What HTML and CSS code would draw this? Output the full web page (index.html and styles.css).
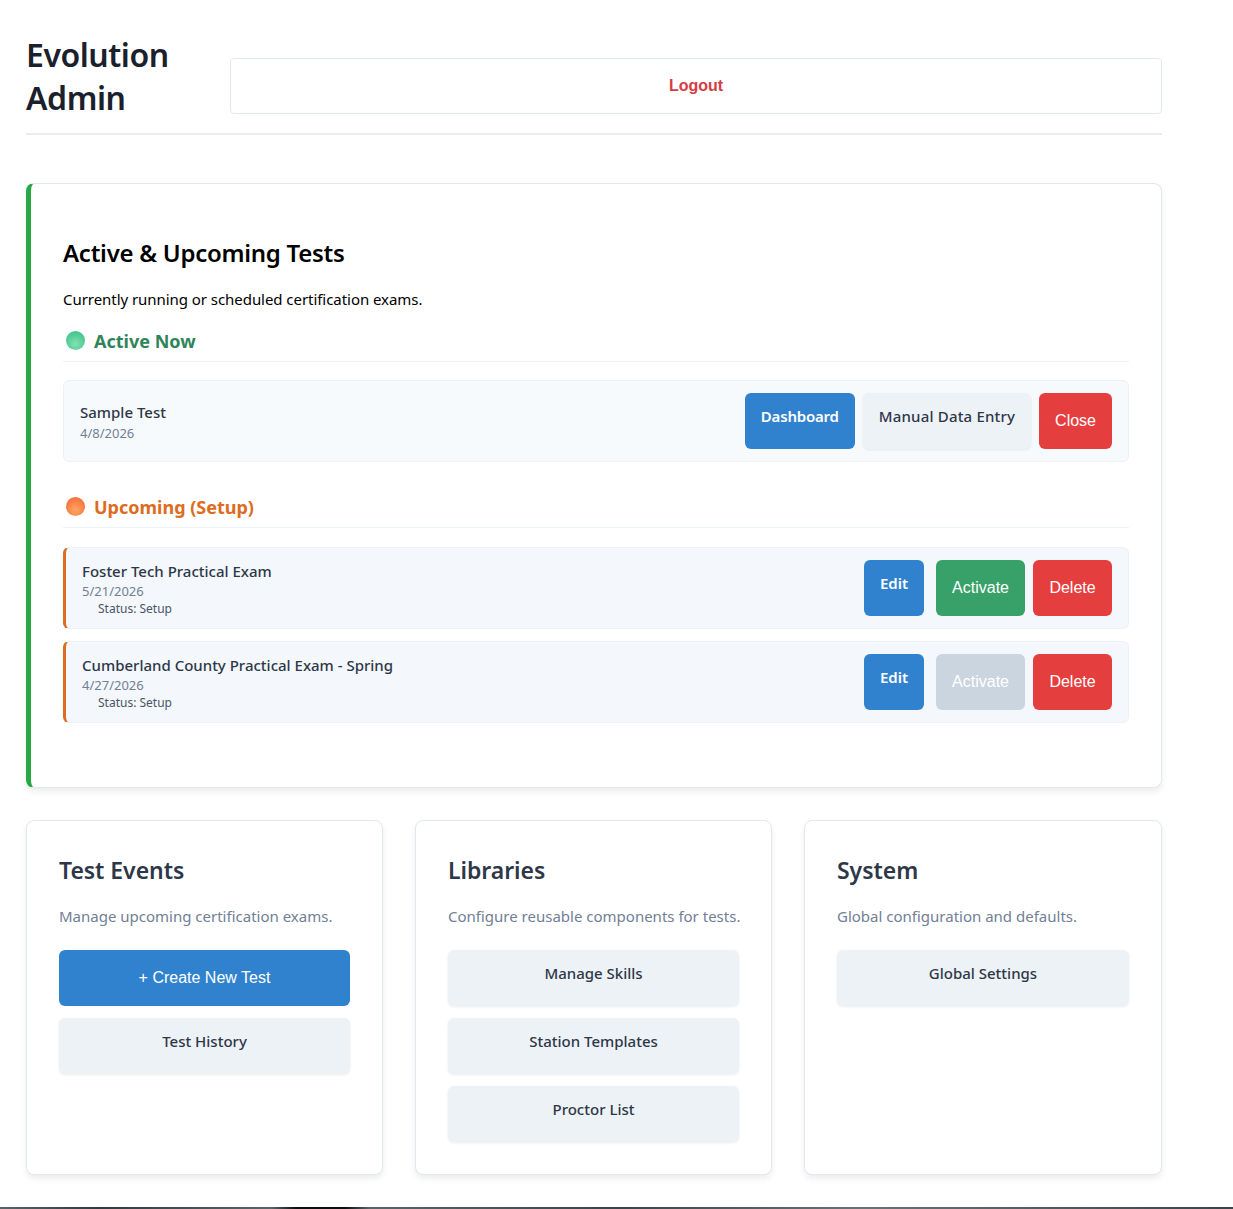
FILE: index.html
```html
<!DOCTYPE html>
<html>
<head>
	<meta charset="utf-8">
	<meta name="viewport" content="width=device-width, initial-scale=1">
	<title>Evolution Admin</title>
	<link rel="stylesheet" href="styles.css">
</head>
<body>
	<div class="page">
		<header class="top">
			<h1>Evolution Admin</h1>
			<button class="logout">Logout</button>
		</header>

		<section class="tests">
			<h2>Active &amp; Upcoming Tests</h2>
			<p class="lead">Currently running or scheduled certification exams.</p>

			<h3 class="group green"><span class="dot dot-green"></span>Active Now</h3>
			<div class="row">
				<div class="info">
					<div class="name">Sample Test</div>
					<div class="date">4/8/2026</div>
				</div>
				<div class="actions">
					<a class="btn blue">Dashboard</a>
					<a class="btn grey manual">Manual Data Entry</a>
					<button class="solid red">Close</button>
				</div>
			</div>

			<h3 class="group orange upcoming"><span class="dot dot-orange"></span>Upcoming (Setup)</h3>
			<div class="row setup">
				<div class="info">
					<div class="name">Foster Tech Practical Exam</div>
					<div class="date">5/21/2026</div>
					<div class="status">Status: Setup</div>
				</div>
				<div class="actions">
					<a class="btn blue edit">Edit</a>
					<button class="solid green-bg">Activate</button>
					<button class="solid red del">Delete</button>
				</div>
			</div>
			<div class="row setup">
				<div class="info">
					<div class="name">Cumberland County Practical Exam - Spring</div>
					<div class="date">4/27/2026</div>
					<div class="status">Status: Setup</div>
				</div>
				<div class="actions">
					<a class="btn blue edit">Edit</a>
					<button class="solid disabled" disabled>Activate</button>
					<button class="solid red del">Delete</button>
				</div>
			</div>
		</section>

		<div class="cards">
			<div class="card">
				<h3>Test Events</h3>
				<p>Manage upcoming certification exams.</p>
				<button class="solid blue wide">+ Create New Test</button>
				<a class="btn grey wide">Test History</a>
			</div>
			<div class="card">
				<h3>Libraries</h3>
				<p>Configure reusable components for tests.</p>
				<a class="btn grey wide">Manage Skills</a>
				<a class="btn grey wide">Station Templates</a>
				<a class="btn grey wide">Proctor List</a>
			</div>
			<div class="card">
				<h3>System</h3>
				<p>Global configuration and defaults.</p>
				<a class="btn grey wide">Global Settings</a>
			</div>
		</div>
	</div>
	<div class="strip"></div>
</body>
</html>
```

FILE: styles.css
```css
* { box-sizing: border-box; }

body {
	margin: 0;
	background: #fff;
	font-family: "Noto Sans", "Open Sans", sans-serif;
	color: #2d3748;
}

.page {
	width: 1136px;
	margin-left: 26px;
	padding-top: 33px;
}

/* header */
.top {
	display: flex;
	align-items: center;
	gap: 62px;
	padding-bottom: 14px;
	border-bottom: 2px solid #e9edf2;
	margin-bottom: 48px;
}

.top h1 {
	margin: 0;
	width: 142px;
	flex-shrink: 0;
	font-size: 32px;
	line-height: 43px;
	font-weight: 600;
	letter-spacing: -0.45px;
	color: #1a202c;
}

.logout {
	flex: 1;
	height: 56px;
	margin-top: 20px;
	background: #fff;
	border: 1px solid #e2e8f0;
	border-radius: 4px;
	font-family: "Liberation Sans", sans-serif;
	font-size: 16px;
	font-weight: 700;
	color: #d63b3f;
}

/* main card */
.tests {
	height: 605px;
	padding: 53px 32px 0 32px;
	background: #fff;
	border: 1px solid #e2e8f0;
	border-left: 5px solid #28a745;
	border-radius: 8px;
	box-shadow: 0 4px 6px rgba(0, 0, 0, 0.07);
	margin-bottom: 32px;
}

.tests h2 {
	margin: 0;
	font-size: 24px;
	line-height: 32px;
	font-weight: 600;
	letter-spacing: -0.27px;
	color: #000;
}

.lead {
	margin: 20px 0 0;
	font-size: 15px;
	line-height: 21px;
	letter-spacing: -0.05px;
	color: #000;
}

.group {
	display: flex;
	align-items: center;
	gap: 9px;
	margin: 17px 0 18px;
	padding: 0 0 7px 3px;
	height: 35px;
	border-bottom: 1px solid #edf2f7;
	font-size: 18px;
	font-weight: 700;
}

.upcoming { margin-top: 31px; margin-bottom: 19px; }
.green { color: #2f855a; }
.orange { color: #dd6b20; }

.dot {
	width: 19px;
	height: 19px;
	border-radius: 50%;
}

.dot-green { background: radial-gradient(circle at 50% 68%, #84e2b2, #4fcb93 60%, #3dbb83); }
.dot-orange { background: radial-gradient(circle at 50% 68%, #ffa860, #f97c47 60%, #f0603a); }

.row {
	display: flex;
	justify-content: space-between;
	height: 82px;
	padding: 12px 16px;
	margin-bottom: 12px;
	background: #f7fafc;
	border: 1px solid #edf2f7;
	border-radius: 6px;
}

.setup {
	border-left: 3px solid #dd6b20;
	background: #f4f7fb;
}

.info { padding-top: 9px; }

.setup .info { padding-top: 1px; }

.name {
	font-size: 15px;
	line-height: 21px;
	font-weight: 500;
}

.row:not(.setup) .name { margin-bottom: 1px; }

.date {
	font-size: 13px;
	line-height: 18px;
	color: #718096;
}

.status {
	padding-left: 16px;
	font-size: 12px;
	line-height: 18px;
	color: #4a5568;
}

.actions {
	display: flex;
	gap: 8px;
}

.btn {
	display: block;
	padding: 12px 16px;
	border-radius: 6px;
	font-size: 15px;
	line-height: 22px;
	font-weight: 500;
	text-align: center;
}

.blue {
	background: #3182ce;
	color: #fff;
	font-weight: 600;
	letter-spacing: -0.2px;
}

.grey {
	background: #edf2f7;
	color: #2d3748;
	box-shadow: 0 1px 3px rgba(0, 0, 0, 0.08);
}

.manual { letter-spacing: 0.18px; }

.edit {
	margin-right: 4px;
	letter-spacing: 0;
}

.solid {
	padding: 0 16px;
	border: 0;
	border-radius: 6px;
	font-family: "Liberation Sans", sans-serif;
	font-size: 16px;
	font-weight: 400;
	letter-spacing: normal;
	color: #fff;
}

.red { background: #e53e3e; }
.del { min-width: 79px; }
.green-bg { background: #38a169; }
.disabled { background: #cbd5e0; }

/* bottom cards */
.cards {
	display: grid;
	grid-template-columns: 357px 357px 358px;
	gap: 32px;
}

.card {
	height: 355px;
	padding: 32px;
	background: #fff;
	border: 1px solid #e2e8f0;
	border-radius: 8px;
	box-shadow: 0 4px 6px rgba(0, 0, 0, 0.07);
}

.card h3 {
	margin: 0;
	font-size: 23px;
	line-height: 34px;
	font-weight: 600;
	letter-spacing: -0.05px;
}

.card p {
	margin: 18px 0 23px;
	font-size: 15px;
	line-height: 22px;
	white-space: nowrap;
	color: #718096;
}

.wide {
	display: block;
	width: 100%;
	height: 56px;
	margin-bottom: 12px;
}

.strip {
	height: 2px;
	margin-top: 32px;
	background: linear-gradient(90deg, #59636a, #2f3a42 8%, #5a646b 22%, #0c0f12 24%, #0c0f12 28%, #5a646b 30%, #3a444c 50%, #6a7278 70%, #3a444c 100%);
}
```
